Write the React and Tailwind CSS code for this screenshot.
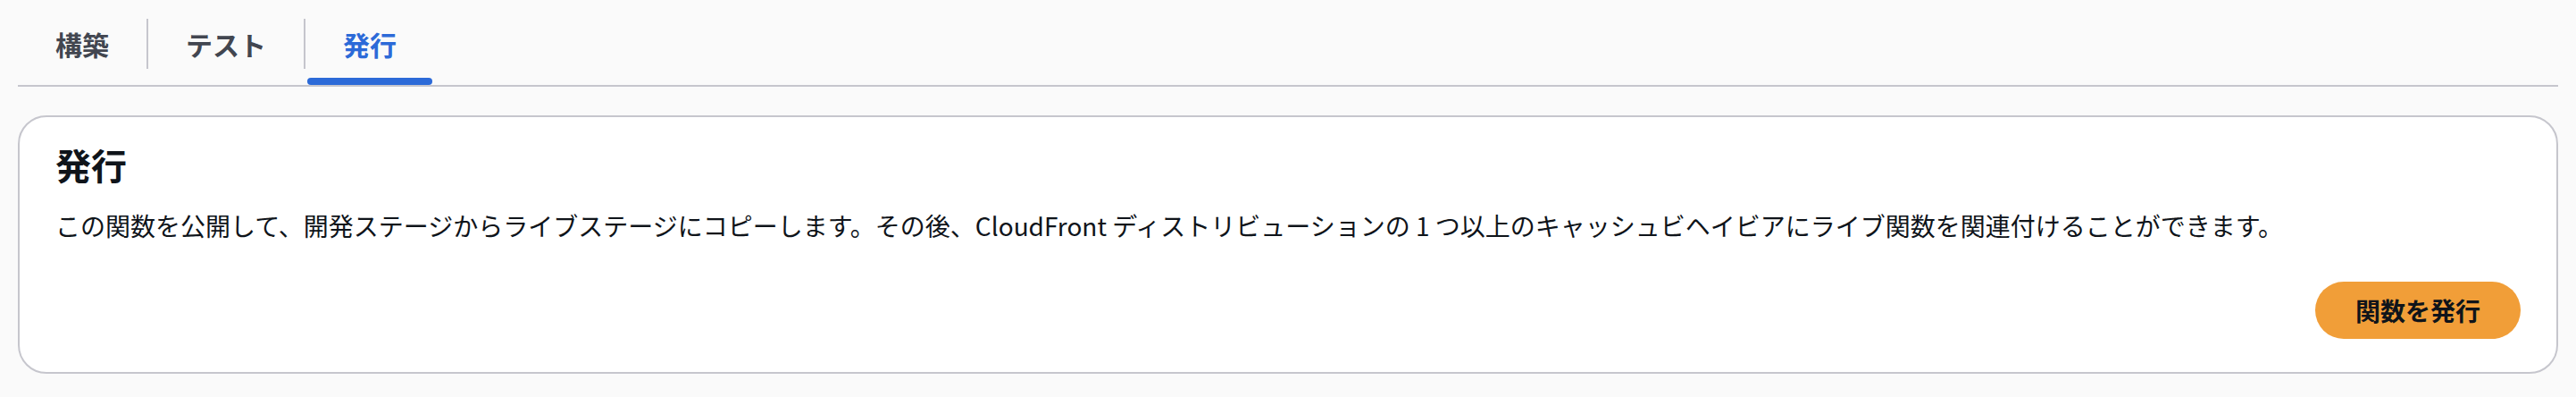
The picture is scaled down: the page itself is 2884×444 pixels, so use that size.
const tabs = [
  { key: 'build', label: '構築' },
  { key: 'test', label: 'テスト' },
  { key: 'publish', label: '発行' },
]

const font = { fontFamily: '"Noto Sans CJK JP", "Noto Sans", sans-serif' }

export default function App() {
  const active = 'publish'

  return (
    <div className="min-h-screen bg-[#fafafa] px-[20px]" style={font}>
      {/* Tabs header */}
      <div className="flex border-b-2 border-[#c6c6cd]">
        {tabs.map((tab, index) => {
          const isActive = tab.key === active
          return (
            <div key={tab.key} className="flex flex-col">
              <div
                className={`mt-[21px] flex h-[56px] items-center px-[42px] text-[30px] font-bold leading-none ${
                  index > 0 ? 'border-l-2 border-[#c6c6cd]' : ''
                } ${isActive ? 'text-[#2c6ad8]' : 'text-[#424650]'}`}
              >
                {tab.label}
              </div>
              <div
                className={`mt-[10px] h-[8px] rounded-full ${
                  isActive ? 'ml-[4px] mr-[2px] bg-[#2c6ad8]' : 'bg-transparent'
                }`}
              />
            </div>
          )
        })}
      </div>

      {/* Publish container */}
      <div className="mt-[32px] rounded-[32px] border-2 border-[#c6c6cd] bg-white px-[40px] pt-[29px] pb-[37px]">
        <h2 className="text-[40px] font-bold leading-[48px] text-[#0f141a]">発行</h2>
        <p className="mt-[24px] text-[28px] leading-[40px] text-[#0f141a]">
          この関数を公開して、開発ステージからライブステージにコピーします。その後、CloudFront ディストリビューションの 1 つ以上のキャッシュビヘイビアにライブ関数を関連付けることができます。
        </p>
        <div className="mt-[43px] flex justify-end">
          <button className="h-[64px] rounded-full bg-[#f19e38] px-[45px] text-[28px] font-bold leading-none text-[#0f141a]">
            関数を発行
          </button>
        </div>
      </div>
    </div>
  )
}
